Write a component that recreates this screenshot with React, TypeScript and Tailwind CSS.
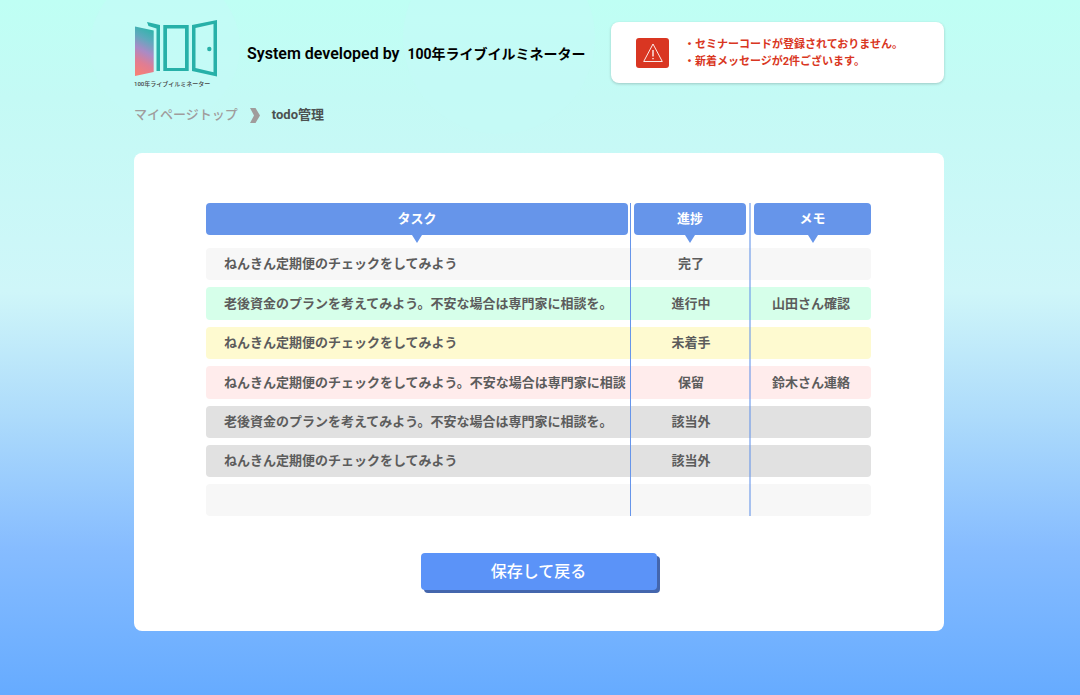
'use client';

import React from 'react';

// Types for the todo list
type TodoStatus = '完了' | '進行中' | '未着手' | '保留' | '該当外';

interface TodoItem {
  id: number;
  task?: string;
  status?: TodoStatus;
  memo?: string;
}

const todos: TodoItem[] = [
  { id: 1, task: 'ねんきん定期便のチェックをしてみよう', status: '完了' },
  { id: 2, task: '老後資金のプランを考えてみよう。不安な場合は専門家に相談を。', status: '進行中', memo: '山田さん確認' },
  { id: 3, task: 'ねんきん定期便のチェックをしてみよう', status: '未着手' },
  { id: 4, task: 'ねんきん定期便のチェックをしてみよう。不安な場合は専門家に相談', status: '保留', memo: '鈴木さん連絡' },
  { id: 5, task: '老後資金のプランを考えてみよう。不安な場合は専門家に相談を。', status: '該当外' },
  { id: 6, task: 'ねんきん定期便のチェックをしてみよう', status: '該当外' },
  { id: 7 },
];

// Row background per status
const statusColors: Record<TodoStatus, string> = {
  完了: 'bg-[#f7f7f7]',
  進行中: 'bg-[#d6ffea]',
  未着手: 'bg-[#fefad0]',
  保留: 'bg-[#ffecec]',
  該当外: 'bg-[#e1e1e1]',
};

const notices = ['・セミナーコードが登録されておりません。', '・新着メッセージが2件ございます。'];

function Logo() {
  return (
    <a href="#" className="flex w-[85px] shrink-0 flex-col">
      <svg viewBox="0 0 85 58" className="h-[58px] w-[85px]" aria-hidden="true">
        <defs>
          <linearGradient id="door" x1="0.6" y1="0" x2="0.4" y2="1">
            <stop offset="0" stopColor="#2fb5ab" />
            <stop offset="0.25" stopColor="#5fa9bd" />
            <stop offset="0.5" stopColor="#a98bc6" />
            <stop offset="0.75" stopColor="#e07d93" />
            <stop offset="1" stopColor="#f58078" />
          </linearGradient>
        </defs>
        <path d="M1 6.500 L19.700 10.500 V52 L1 56 Z" fill="url(#door)" />
        <path d="M13 2 L26 5 V51 H22.500 V8.500 L14.500 6 Z" fill="#27b0a8" />
        <path d="M29.300 5 H54.700 V51 H29.300 Z M33 8.500 V48 H51 V8.500 Z" fill="#27b0a8" fillRule="evenodd" />
        <path d="M58 5 L83 0 V56.500 L58 51 Z M61.500 8 V48 L79.500 52.300 V4 Z" fill="#27b0a8" fillRule="evenodd" />
        <circle cx="75.300" cy="29" r="2.200" fill="#27b0a8" />
      </svg>
      <span className="whitespace-nowrap text-[6px] leading-[12px] font-medium text-[#444]">
        100年ライブイルミネーター
      </span>
    </a>
  );
}

/**
 * Notice box at the top right
 */
function NoticeBox() {
  return (
    <div className="mt-0.5 flex h-[61px] w-[333px] shrink-0 items-center gap-[15px] rounded-lg bg-white pl-[25px] shadow-[0_1px_3px_rgba(0,0,0,0.2)]">
      <span className="flex h-[30px] w-[33px] items-center justify-center rounded-[3px] bg-[#d93622]">
        <svg viewBox="0 0 20 20" className="size-5" fill="none" stroke="#fff" aria-hidden="true">
          <path d="M10 1 L19.300 18.500 H0.700 Z" strokeWidth="0.9" />
          <path d="M10 7 V13.500" strokeWidth="1.300" />
          <path d="M10 15 V16.300" strokeWidth="1.300" />
        </svg>
      </span>
      <ul className="text-[11px] leading-[17px] font-bold text-[#d93622]">
        {notices.map((notice) => (
          <li key={notice}>{notice}</li>
        ))}
      </ul>
    </div>
  );
}

function HeaderLabel({ children }: { children: React.ReactNode }) {
  return (
    <div className="relative h-8 rounded bg-[#6695ea] text-center leading-8 font-bold text-white">
      {children}
      <svg viewBox="0 0 10 8" className="absolute top-full left-1/2 h-2 w-2.5 -translate-x-1/2" aria-hidden="true">
        <path d="M0 0 H10 L5 8 Z" fill="#6695ea" />
      </svg>
    </div>
  );
}

function TodoTable() {
  return (
    <div className="relative">
      <table className="w-full table-fixed border-separate border-spacing-x-0 border-spacing-y-[7px] text-[13px] leading-5 font-bold text-[#5c5c5c]">
        <colgroup>
          <col />
          <col className="w-[120px]" />
          <col className="w-[120px]" />
        </colgroup>
        <thead>
          <tr>
            <th scope="col" className="pr-[3px] pb-1.5">
              <HeaderLabel>タスク</HeaderLabel>
            </th>
            <th scope="col" className="pr-[5px] pb-1.5 pl-[3px]">
              <HeaderLabel>進捗</HeaderLabel>
            </th>
            <th scope="col" className="pb-1.5 pl-[3px]">
              <HeaderLabel>メモ</HeaderLabel>
            </th>
          </tr>
        </thead>
        <tbody>
          {todos.map((todo) => {
            const color = todo.status ? statusColors[todo.status] : 'bg-[#f7f7f7]';
            return (
              <tr key={todo.id} className="h-8 nth-2:h-[33px] nth-4:h-[33px]">
                <td className={`rounded-l py-0 pl-[18px] whitespace-nowrap ${color}`}>{todo.task}</td>
                <td className={`text-center ${color}`}>{todo.status}</td>
                <td className={`rounded-r text-center ${color}`}>{todo.memo}</td>
              </tr>
            );
          })}
        </tbody>
      </table>

      {/* Column dividers */}
      <div className="absolute top-[7px] right-[240px] bottom-[7px] w-px bg-[#6695ea]" />
      <div className="absolute top-[7px] right-[120px] bottom-[7px] w-0.5 bg-[#6695ea]/55" />
    </div>
  );
}

export default function App() {
  return (
    <div className="relative min-h-screen overflow-hidden bg-[linear-gradient(180deg,#bffff4_0%,#c4faf5_14%,#cff6f9_42%,#addbfb_60%,#86bcff_79%,#66abff_100%)] font-['Roboto','Noto_Sans_CJK_JP',sans-serif]">
      {/* Background circles */}
      <div className="absolute -top-7 left-[90px] size-[150px] rounded-full bg-[#c5faf7]/60" />
      <div className="absolute -top-[58px] left-[403px] size-[192px] rounded-full bg-[#c5faf7]/60" />

      <div className="relative mx-auto max-w-[812px] pt-5 pr-0.5 pb-16">
        <header className="flex items-start">
          <Logo />
          <p className="ml-7 flex-1 pt-[22px] text-base leading-6 font-semibold whitespace-nowrap text-black">
            System developed by&nbsp; <span className="text-sm leading-6 font-bold">100年ライブイルミネーター</span>
          </p>
          <NoticeBox />
        </header>

        <nav aria-label="breadcrumb" className="mt-[15px] flex h-5 items-center text-[13px] leading-5 font-bold">
          <a href="#" className="font-medium text-[#a09c9c]">
            マイページトップ
          </a>
          <svg viewBox="0 0 10 15" className="mr-3 ml-3 h-[15px] w-2.5" aria-hidden="true">
            <path d="M0 0 H5.500 L10 7.500 L5.500 15 H0 L4 7.500 Z" fill="#a09c9c" />
          </svg>
          <span className="text-[#4c5150]">todo管理</span>
        </nav>

        <main className="mt-7 rounded-lg bg-white pt-[43px] pr-[73px] pb-[41px] pl-[72px]">
          <TodoTable />
          <button
            type="button"
            className="mx-auto mt-[30px] block h-[37px] w-[236px] rounded bg-[#5b93f8] text-base leading-5 font-medium text-white shadow-[3px_3px_0_#4466ad]"
          >
            保存して戻る
          </button>
        </main>
      </div>
    </div>
  );
}
